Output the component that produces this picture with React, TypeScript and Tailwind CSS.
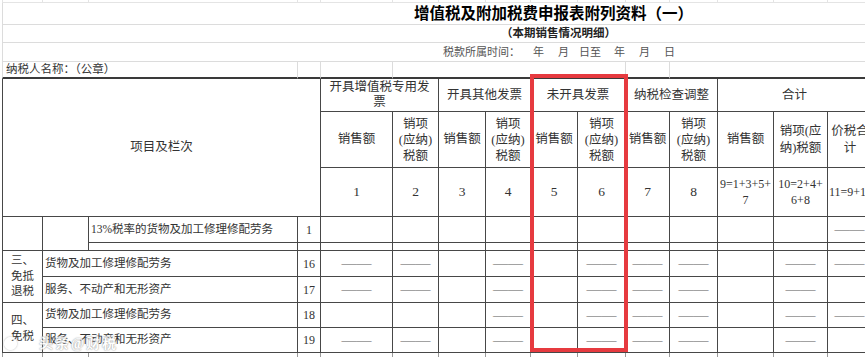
import clsx from "clsx";
import type { ReactNode } from "react";

const D = "——";

// 11 data columns per body row
const bodyRows: { no: string; item: string; cells: string[] }[] = [
  { no: "16", item: "货物及加工修理修配劳务", cells: [D, D, "", D, "", D, D, D, "", D, D] },
  { no: "17", item: "服务、不动产和无形资产", cells: [D, D, "", D, "", D, D, D, "", D, ""] },
  { no: "18", item: "货物及加工修理修配劳务", cells: ["", "", "", D, "", D, D, D, "", D, D] },
  { no: "19", item: "服务、不动产和无形资产", cells: [D, D, "", D, "", D, D, D, "", D, ""] },
];

const dk = "border-r border-b border-[#474747]";

const Cell = ({ className, children }: { className?: string; children?: ReactNode }) => (
  <div className={clsx("flex items-center justify-center text-center", className)}>{children}</div>
);

const Dash = ({ v }: { v: string }) =>
  v ? <span className="text-[15px] leading-none text-[#5a5a5a]">{v}</span> : null;

const TaxAmt = () => (
  <span className="leading-[16px]">
    销项<br />(应纳)<br />税额
  </span>
);

export default function App() {
  return (
    <div className="relative w-[865px] h-[357px] overflow-hidden bg-white text-[#333] [font-family:'Liberation_Serif','Noto_Sans_CJK_SC',serif]">
      <div className="ml-[2px] w-max grid grid-cols-[41px_46px_209px_23px_72px_46px_47px_45px_47px_48px_44px_48px_56px_54px_44px] grid-rows-[3px_22px_18px_19px_17px_33px_56px_49px_26px_8px_26px_26px_25px_25px_4px]">
        {/* top strip */}
        {Array.from({ length: 15 }).map((_, i) => (
          <div key={i} className={clsx("border-r border-b border-[#e4e4e4]", i === 0 && "border-l")} />
        ))}

        {/* title rows */}
        <div className="col-span-15 flex items-center border-l border-b border-[#dcdcdc] pl-[411px] text-[15.5px] font-bold text-black">
          增值税及附加税费申报表附列资料（一）
        </div>
        <div className="col-span-15 flex items-center border-l border-b border-[#dcdcdc] pl-[498px] text-[11.5px] font-bold text-[#222]">
          （本期销售情况明细）
        </div>
        <div className="col-span-15 flex items-center border-l border-b border-[#dcdcdc] pl-[440px] text-[11px] text-[#555]">
          <span>税款所属时间：</span>
          <span className="ml-[13px]">年</span>
          <span className="ml-[14px]">月</span>
          <span className="ml-[10px]">日至</span>
          <span className="ml-[13px]">年</span>
          <span className="ml-[14px]">月</span>
          <span className="ml-[14px]">日</span>
        </div>

        {/* taxpayer row */}
        <div className="col-span-3 flex items-center border-l border-r border-b-2 border-l-[#dcdcdc] border-r-[#dcdcdc] border-b-[#3a3a3a] pl-[3px] text-[11.5px]">
          纳税人名称：（公章）
        </div>
        <div className="border-r border-b-2 border-r-[#dcdcdc] border-b-[#3a3a3a]" />
        <div className="border-r border-b-2 border-r-[#dcdcdc] border-b-[#3a3a3a]" />
        <div className="col-span-5 border-r border-b-2 border-r-[#dcdcdc] border-b-[#3a3a3a]" />
        <div className="border-r border-b-2 border-r-[#dcdcdc] border-b-[#3a3a3a]" />
        <div className="col-span-4 border-b-2 border-b-[#3a3a3a]" />

        {/* header */}
        <Cell className={clsx(dk, "col-span-4 row-span-3 border-l text-[12.5px]")}>项目及栏次</Cell>
        <Cell className={clsx(dk, "col-span-2 text-[12.5px] leading-[15px]")}>
          <span>开具增值税专用发<br />票</span>
        </Cell>
        <Cell className={clsx(dk, "col-span-2 text-[12.5px]")}>开具其他发票</Cell>
        <Cell className={clsx(dk, "col-span-2 text-[12.5px]")}>未开具发票</Cell>
        <Cell className={clsx(dk, "col-span-2 text-[12.5px]")}>纳税检查调整</Cell>
        <Cell className={clsx(dk, "col-span-3 text-[12.5px]")}>合计</Cell>

        {[0, 1, 2, 3].map((i) => [
          <Cell key={`s${i}`} className={clsx(dk, "text-[12.5px]")}>销售额</Cell>,
          <Cell key={`t${i}`} className={clsx(dk, "text-[12.5px]")}><TaxAmt /></Cell>,
        ])}
        <Cell className={clsx(dk, "text-[12.5px]")}>销售额</Cell>
        <Cell className={clsx(dk, "text-[12.5px] leading-[17px]")}>
          <span>销项(应<br />纳)税额</span>
        </Cell>
        <div className={clsx(dk, "flex items-center pl-[3px] text-[12.5px] leading-[17px]")}>
          <span className="w-[38px] text-center">价税合<br />计</span>
        </div>

        {["1", "2", "3", "4", "5", "6", "7", "8"].map((n) => (
          <Cell key={n} className={clsx(dk, "text-[13.5px]")}>{n}</Cell>
        ))}
        <Cell className={clsx(dk, "text-[12px] leading-[16px]")}>
          <span>9=1+3+5+<br />7</span>
        </Cell>
        <Cell className={clsx(dk, "text-[12px] leading-[16px]")}>
          <span>10=2+4+<br />6+8</span>
        </Cell>
        <div className={clsx(dk, "flex items-center overflow-hidden pl-[1px] text-[12px] whitespace-nowrap")}>11=9+10</div>

        {/* 13% row */}
        <div className={clsx(dk, "row-span-2 border-l")} />
        <div className={clsx(dk, "row-span-2")} />
        <div className={clsx(dk, "flex items-center pl-[2px] text-[11.5px] whitespace-nowrap")}>13%税率的货物及加工修理修配劳务</div>
        <Cell className={clsx(dk, "text-[12px]")}>1</Cell>
        {Array.from({ length: 11 }).map((_, i) => (
          <Cell key={i} className={dk}><Dash v={i === 10 ? D : ""} /></Cell>
        ))}

        {/* gap row */}
        {Array.from({ length: 13 }).map((_, i) => (
          <div key={i} className={dk} />
        ))}

        {/* body rows */}
        {bodyRows.map((r, ri) => [
          ri === 0 ? (
            <Cell key="g3" className={clsx(dk, "row-span-2 border-l text-[11.5px] leading-[15.5px]")}>
              <span>三、<br />免抵<br />退税</span>
            </Cell>
          ) : ri === 2 ? (
            <Cell key="g4" className={clsx(dk, "row-span-2 border-l text-[11.5px] leading-[16px]")}>
              <span>四、<br />免税</span>
            </Cell>
          ) : null,
          <div key="it" className={clsx(dk, "col-span-2 flex items-center pl-[2px] text-[11.5px]")}>{r.item}</div>,
          <Cell key="no" className={clsx(dk, "text-[12px]")}>{r.no}</Cell>,
          ...r.cells.map((c, ci) => (
            <Cell key={`c${ci}`} className={dk}><Dash v={c} /></Cell>
          )),
        ])}

        {/* bottom strip */}
        {Array.from({ length: 15 }).map((_, i) => (
          <div key={i} className={clsx("border-r border-[#9a9a9a]", i === 0 && "border-l")} />
        ))}
      </div>

      {/* watermark */}
      <div className="absolute left-[4px] top-[333px] flex items-center text-white opacity-80 [text-shadow:0_0_1px_#888,0_0_2px_#aaa]">
        <span className="w-[13px] h-[13px] rounded-full border-2 border-white shadow-[0_0_2px_#999]" />
        <span className="ml-[22px] text-[14px] font-bold tracking-[2px]">头条@财税</span>
      </div>

      {/* highlight box */}
      <div className="absolute left-[530px] top-[74px] w-[98px] h-[278px] border-[4px] border-[#e63a3f]" />
    </div>
  );
}
